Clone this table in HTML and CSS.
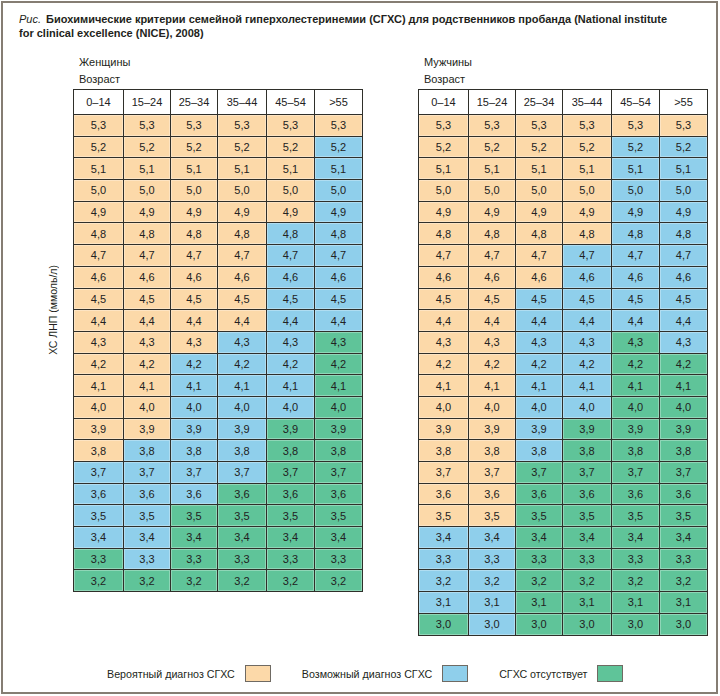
FILE: index.html
```html
<!DOCTYPE html>
<html lang="ru">
<head>
<meta charset="utf-8">
<title>Критерии СГХС</title>
<link rel="stylesheet" href="styles.css">
</head>
<body>
<div class="frame">
  <p class="title"><em>Рис.</em> Биохимические критерии семейной гиперхолестеринемии (СГХС) для родственников пробанда (National institute for clinical excellence (NICE), 2008)</p>
  <div class="charts">
    <div class="axis"><span>ХС ЛНП (ммоль/л)</span></div>
    <div class="panel">
      <div class="labels"><div>Женщины</div><div>Возраст</div></div>
      <div class="grid">
        <span class="h">0–14</span><span class="h">15–24</span><span class="h">25–34</span><span class="h">35–44</span><span class="h">45–54</span><span class="h">&gt;55</span>
        <span class="p">5,3</span><span class="p">5,3</span><span class="p">5,3</span><span class="p">5,3</span><span class="p">5,3</span><span class="p">5,3</span>
        <span class="p">5,2</span><span class="p">5,2</span><span class="p">5,2</span><span class="p">5,2</span><span class="p">5,2</span><span class="b">5,2</span>
        <span class="p">5,1</span><span class="p">5,1</span><span class="p">5,1</span><span class="p">5,1</span><span class="p">5,1</span><span class="b">5,1</span>
        <span class="p">5,0</span><span class="p">5,0</span><span class="p">5,0</span><span class="p">5,0</span><span class="p">5,0</span><span class="b">5,0</span>
        <span class="p">4,9</span><span class="p">4,9</span><span class="p">4,9</span><span class="p">4,9</span><span class="p">4,9</span><span class="b">4,9</span>
        <span class="p">4,8</span><span class="p">4,8</span><span class="p">4,8</span><span class="p">4,8</span><span class="b">4,8</span><span class="b">4,8</span>
        <span class="p">4,7</span><span class="p">4,7</span><span class="p">4,7</span><span class="p">4,7</span><span class="b">4,7</span><span class="b">4,7</span>
        <span class="p">4,6</span><span class="p">4,6</span><span class="p">4,6</span><span class="p">4,6</span><span class="b">4,6</span><span class="b">4,6</span>
        <span class="p">4,5</span><span class="p">4,5</span><span class="p">4,5</span><span class="p">4,5</span><span class="b">4,5</span><span class="b">4,5</span>
        <span class="p">4,4</span><span class="p">4,4</span><span class="p">4,4</span><span class="p">4,4</span><span class="b">4,4</span><span class="b">4,4</span>
        <span class="p">4,3</span><span class="p">4,3</span><span class="p">4,3</span><span class="b">4,3</span><span class="b">4,3</span><span class="g">4,3</span>
        <span class="p">4,2</span><span class="p">4,2</span><span class="b">4,2</span><span class="b">4,2</span><span class="b">4,2</span><span class="g">4,2</span>
        <span class="p">4,1</span><span class="p">4,1</span><span class="b">4,1</span><span class="b">4,1</span><span class="b">4,1</span><span class="g">4,1</span>
        <span class="p">4,0</span><span class="p">4,0</span><span class="b">4,0</span><span class="b">4,0</span><span class="b">4,0</span><span class="g">4,0</span>
        <span class="p">3,9</span><span class="p">3,9</span><span class="b">3,9</span><span class="b">3,9</span><span class="g">3,9</span><span class="g">3,9</span>
        <span class="p">3,8</span><span class="b">3,8</span><span class="b">3,8</span><span class="b">3,8</span><span class="g">3,8</span><span class="g">3,8</span>
        <span class="b">3,7</span><span class="b">3,7</span><span class="b">3,7</span><span class="b">3,7</span><span class="g">3,7</span><span class="g">3,7</span>
        <span class="b">3,6</span><span class="b">3,6</span><span class="b">3,6</span><span class="g">3,6</span><span class="g">3,6</span><span class="g">3,6</span>
        <span class="b">3,5</span><span class="b">3,5</span><span class="g">3,5</span><span class="g">3,5</span><span class="g">3,5</span><span class="g">3,5</span>
        <span class="b">3,4</span><span class="b">3,4</span><span class="g">3,4</span><span class="g">3,4</span><span class="g">3,4</span><span class="g">3,4</span>
        <span class="g">3,3</span><span class="b">3,3</span><span class="g">3,3</span><span class="g">3,3</span><span class="g">3,3</span><span class="g">3,3</span>
        <span class="g">3,2</span><span class="g">3,2</span><span class="g">3,2</span><span class="g">3,2</span><span class="g">3,2</span><span class="g">3,2</span>
      </div>
    </div>
    <div class="panel panel-right">
      <div class="labels"><div>Мужчины</div><div>Возраст</div></div>
      <div class="grid">
        <span class="h">0–14</span><span class="h">15–24</span><span class="h">25–34</span><span class="h">35–44</span><span class="h">45–54</span><span class="h">&gt;55</span>
        <span class="p">5,3</span><span class="p">5,3</span><span class="p">5,3</span><span class="p">5,3</span><span class="p">5,3</span><span class="p">5,3</span>
        <span class="p">5,2</span><span class="p">5,2</span><span class="p">5,2</span><span class="p">5,2</span><span class="b">5,2</span><span class="b">5,2</span>
        <span class="p">5,1</span><span class="p">5,1</span><span class="p">5,1</span><span class="p">5,1</span><span class="b">5,1</span><span class="b">5,1</span>
        <span class="p">5,0</span><span class="p">5,0</span><span class="p">5,0</span><span class="p">5,0</span><span class="b">5,0</span><span class="b">5,0</span>
        <span class="p">4,9</span><span class="p">4,9</span><span class="p">4,9</span><span class="p">4,9</span><span class="b">4,9</span><span class="b">4,9</span>
        <span class="p">4,8</span><span class="p">4,8</span><span class="p">4,8</span><span class="p">4,8</span><span class="b">4,8</span><span class="b">4,8</span>
        <span class="p">4,7</span><span class="p">4,7</span><span class="p">4,7</span><span class="b">4,7</span><span class="b">4,7</span><span class="b">4,7</span>
        <span class="p">4,6</span><span class="p">4,6</span><span class="p">4,6</span><span class="b">4,6</span><span class="b">4,6</span><span class="b">4,6</span>
        <span class="p">4,5</span><span class="p">4,5</span><span class="b">4,5</span><span class="b">4,5</span><span class="b">4,5</span><span class="b">4,5</span>
        <span class="p">4,4</span><span class="p">4,4</span><span class="b">4,4</span><span class="b">4,4</span><span class="b">4,4</span><span class="b">4,4</span>
        <span class="p">4,3</span><span class="p">4,3</span><span class="b">4,3</span><span class="b">4,3</span><span class="g">4,3</span><span class="b">4,3</span>
        <span class="p">4,2</span><span class="p">4,2</span><span class="b">4,2</span><span class="b">4,2</span><span class="g">4,2</span><span class="g">4,2</span>
        <span class="p">4,1</span><span class="p">4,1</span><span class="b">4,1</span><span class="b">4,1</span><span class="g">4,1</span><span class="g">4,1</span>
        <span class="p">4,0</span><span class="p">4,0</span><span class="b">4,0</span><span class="b">4,0</span><span class="g">4,0</span><span class="g">4,0</span>
        <span class="p">3,9</span><span class="p">3,9</span><span class="b">3,9</span><span class="g">3,9</span><span class="g">3,9</span><span class="g">3,9</span>
        <span class="p">3,8</span><span class="p">3,8</span><span class="b">3,8</span><span class="g">3,8</span><span class="g">3,8</span><span class="g">3,8</span>
        <span class="p">3,7</span><span class="p">3,7</span><span class="g">3,7</span><span class="g">3,7</span><span class="g">3,7</span><span class="g">3,7</span>
        <span class="p">3,6</span><span class="p">3,6</span><span class="g">3,6</span><span class="g">3,6</span><span class="g">3,6</span><span class="g">3,6</span>
        <span class="p">3,5</span><span class="p">3,5</span><span class="g">3,5</span><span class="g">3,5</span><span class="g">3,5</span><span class="g">3,5</span>
        <span class="b">3,4</span><span class="b">3,4</span><span class="g">3,4</span><span class="g">3,4</span><span class="g">3,4</span><span class="g">3,4</span>
        <span class="b">3,3</span><span class="b">3,3</span><span class="g">3,3</span><span class="g">3,3</span><span class="g">3,3</span><span class="g">3,3</span>
        <span class="b">3,2</span><span class="b">3,2</span><span class="g">3,2</span><span class="g">3,2</span><span class="g">3,2</span><span class="g">3,2</span>
        <span class="b">3,1</span><span class="b">3,1</span><span class="g">3,1</span><span class="g">3,1</span><span class="g">3,1</span><span class="g">3,1</span>
        <span class="g">3,0</span><span class="b">3,0</span><span class="g">3,0</span><span class="g">3,0</span><span class="g">3,0</span><span class="g">3,0</span>
      </div>
    </div>
  </div>
  <div class="legend">
    <span>Вероятный диагноз СГХС</span><i class="sw p"></i>
    <span>Возможный диагноз СГХС</span><i class="sw b"></i>
    <span>СГХС отсутствует</span><i class="sw g last"></i>
  </div>
</div>
</body>
</html>
```
FILE: styles.css
```css
* { box-sizing: border-box; }

body {
  margin: 0;
  background: #fff;
  color: #231f20;
  font-family: "Liberation Sans", Arial, sans-serif;
}

.frame {
  margin: 1px;
  width: 717px;
  height: 693px;
  border: 2px solid #857d73;
  padding: 9px 0 0 16px;
  display: flex;
  flex-direction: column;
}

.title {
  margin: 0;
  max-width: 655px;
  font-size: 11px;
  line-height: 14px;
  font-weight: bold;
}

.title em {
  font-weight: normal;
  font-style: italic;
  margin-right: 2px;
}

.charts {
  display: flex;
  margin-top: 14px;
}

.axis {
  width: 54px;
  display: flex;
  justify-content: flex-end;
  padding-right: 14px;
  padding-top: 211px;
}

.axis span {
  writing-mode: vertical-rl;
  transform: rotate(180deg);
  font-size: 10.5px;
  line-height: 12px;
  white-space: nowrap;
  align-self: flex-start;
}

.panel-right {
  margin-left: 55px;
}

.labels {
  padding-left: 6px;
  font-size: 11px;
  line-height: 17px;
  margin-bottom: 1px;
}

.grid {
  display: grid;
  grid-template-columns: 50px 47px 47px 49px 48px 48px;
  grid-template-rows: 25px;
  grid-auto-rows: 21.7px;
  border-left: 1px solid #2f2f2a;
  border-top: 1px solid #2f2f2a;
  width: 290px;
}

.grid span {
  display: flex;
  align-items: center;
  justify-content: center;
  border-right: 1px solid #2f2f2a;
  border-bottom: 1px solid #2f2f2a;
  font-size: 11px;
  color: #222;
  box-shadow: inset 0 0 0 1px rgba(255, 255, 255, 0.3);
}

.grid .h { background: #fff; }

.p { background: #fcd9a9; }
.b { background: #8fcfeb; }
.g { background: #5fc499; }

.legend {
  margin-top: auto;
  margin-bottom: 10px;
  padding-left: 88px;
  display: flex;
  align-items: center;
  font-size: 10.7px;
}

.sw {
  width: 26px;
  height: 17px;
  border: 1px solid #6f6a63;
  margin-left: 10px;
  margin-right: 31px;
}

.sw.last { margin-right: 0; }
```
